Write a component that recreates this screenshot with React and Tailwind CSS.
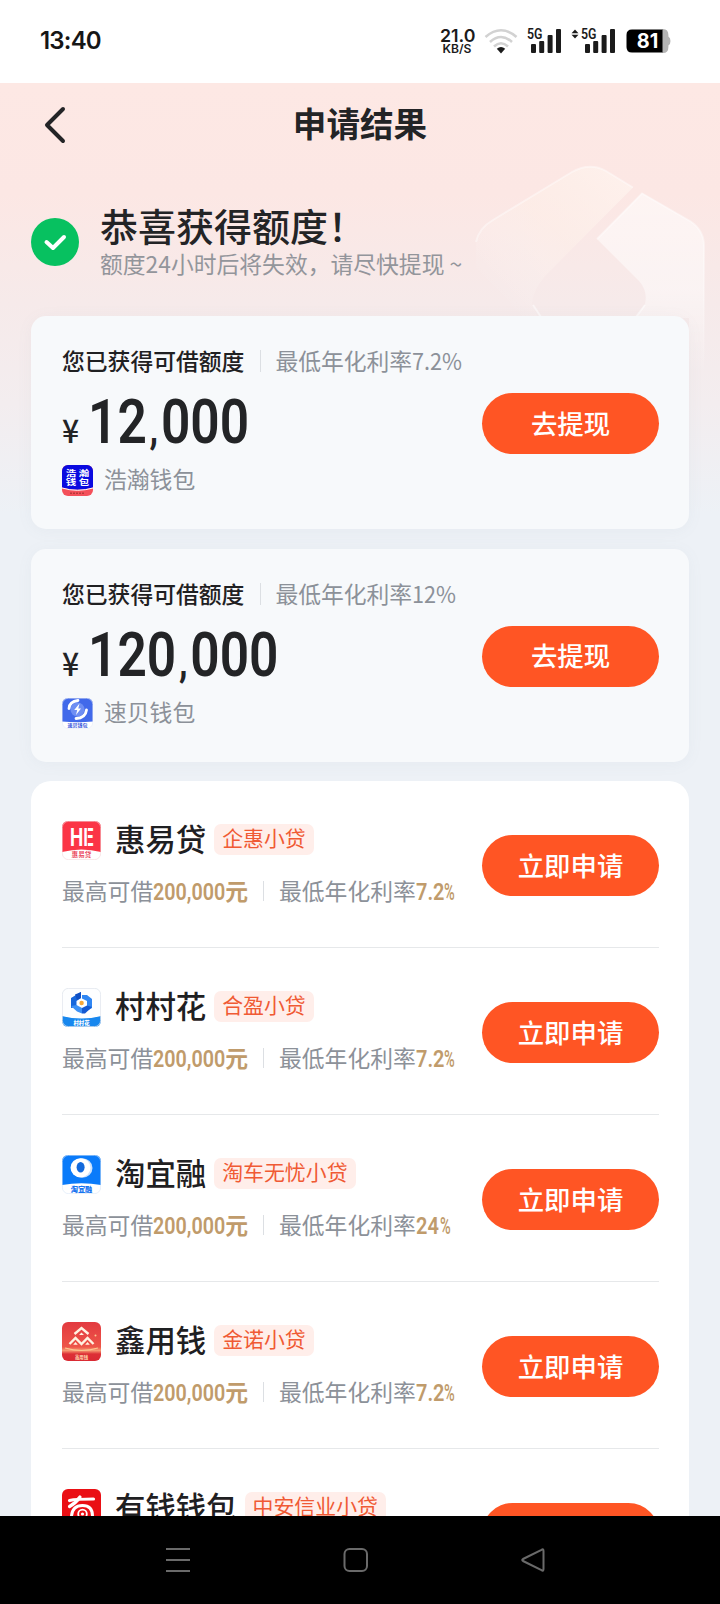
const CJK = "font-['Noto_Sans_CJK_SC',sans-serif]";

function SignalBars({ arrows }) {
  return (
    <svg className="overflow-visible" width={arrows ? 46 : 36} height="26" viewBox={arrows ? "-10 0 46 26" : "0 0 36 26"} fill="#1b1b1b">
      {arrows && (
        <>
          <path d="M-9.5 4.2 L-6 0.4 L-2.5 4.2Z" transform="translate(0 1)" />
          <path d="M-9.5 6.8 L-6 10.6 L-2.5 6.8Z" />
        </>
      )}
      <text x="0" y="10.8" fontFamily="Roboto, sans-serif" fontSize="14.6" fontWeight="600" textLength="15.5" lengthAdjust="spacingAndGlyphs">5G</text>
      <rect x="4" y="16" width="5" height="9" rx="1" />
      <rect x="12.2" y="13" width="5" height="12" rx="1" />
      <rect x="20.6" y="7" width="5" height="18" rx="1" />
      <rect x="29" y="1" width="5" height="24" rx="1" />
    </svg>
  );
}

function StatusBar() {
  return (
    <div className="flex h-[83px] shrink-0 items-center bg-white pb-[2px] pl-10 pr-[49px] text-[#161616]">
      <div className="w-[70px] whitespace-nowrap font-['Inter',sans-serif] text-[24px] font-semibold leading-none tracking-[-0.8px]">13:40</div>
      <div className="ml-auto flex items-center">
        <svg className="overflow-visible" width="36" height="26" viewBox="0 0 36 26" fill="#1b1b1b" fontFamily="Inter, sans-serif">
          <text x="0" y="14" fontSize="17.500" fontWeight="600" textLength="35.500" lengthAdjust="spacingAndGlyphs">21.0</text>
          <text x="2.500" y="24.500" fontSize="11.500" fontWeight="600" textLength="29" lengthAdjust="spacingAndGlyphs">KB/S</text>
        </svg>
        <svg className="ml-[8px]" width="34" height="26" viewBox="0 0 34 26" fill="none" strokeWidth="2.6">
          <g stroke="#d2d2d2">
            <path d="M1.5 9 Q17 -4.5 32.5 9" />
            <path d="M6 14 Q17 4 28 14" />
            <path d="M10 18.5 Q17 12 24 18.5" />
          </g>
          <path d="M17 25.5 L12.8 20.8 Q17 17 21.2 20.8Z" fill="#1b1b1b" />
        </svg>
        <div className="ml-[9px] flex"><SignalBars /></div>
        <div className="ml-[8px] flex"><SignalBars arrows /></div>
        <svg className="ml-[9px] overflow-visible" width="45" height="24" viewBox="0 0 45 24">
          <path d="M36 0 H37 Q42.4 0 42.4 6 V7.5 Q44.5 8.5 44.5 12 T42.4 16.5 V18 Q42.4 24 37 24 H36Z" fill="#b5b5b5" />
          <path d="M6 0.5 H36.5 V23.5 H6 Q0.5 23.5 0.5 18 V6 Q0.5 0.5 6 0.5Z" fill="#000" />
          <text x="10.8" y="19.4" fontFamily="Inter, sans-serif" fontSize="20" fontWeight="700" fill="#fff" textLength="21.500" lengthAdjust="spacingAndGlyphs">81</text>
        </svg>
      </div>
    </div>
  );
}

function Watermark() {
  return (
    <svg className="absolute left-[470px] top-[78px]" width="240" height="220" viewBox="470 161 240 220" fill="none">
      <defs>
        <linearGradient id="wmLeft" x1="625" y1="180" x2="500" y2="300" gradientUnits="userSpaceOnUse">
          <stop offset="0" stopColor="#fff8f2" stopOpacity="0.55" />
          <stop offset="0.5" stopColor="#fff3ea" stopOpacity="0.4" />
          <stop offset="1" stopColor="#fff" stopOpacity="0" />
        </linearGradient>
        <linearGradient id="wmRight" x1="680" y1="210" x2="680" y2="375" gradientUnits="userSpaceOnUse">
          <stop offset="0" stopColor="#fff" stopOpacity="0.55" />
          <stop offset="0.5" stopColor="#fff" stopOpacity="0.45" />
          <stop offset="1" stopColor="#fff" stopOpacity="0" />
        </linearGradient>
        <linearGradient id="wmEdge" x1="0" y1="240" x2="0" y2="370" gradientUnits="userSpaceOnUse">
          <stop offset="0" stopColor="#fff" stopOpacity="0.4" />
          <stop offset="1" stopColor="#fff" stopOpacity="0" />
        </linearGradient>
      </defs>
      <path d="M476 244 Q479 228 493 220 L572 172 Q590 162 606 171 L633 187.500 L545 276 Q533 290 532 304 L538 318 L476 318Z" fill="url(#wmLeft)" />
      <path d="M642 193 L690 221 Q704 230 704 246 V375 H689 V318 H636 L645 304 Q648 291 639 281 L597 239Z" fill="url(#wmRight)" />
      <path d="M476 242 Q479 228 493 220 L572 172 Q590 162 606 171 L633 187.500" stroke="#fff" strokeOpacity="0.4" strokeWidth="2" />
      <path d="M597 239 L642 193.500 L690 221 Q704 230 704 246 V370" stroke="url(#wmEdge)" strokeWidth="2" />
      <path d="M533 305 L541 317 M645 305 L636 317" stroke="#fff" strokeOpacity="0.5" strokeWidth="2" />
    </svg>
  );
}

const logoText = { fontFamily: "Noto Sans CJK SC, sans-serif", textAnchor: "middle" };

function HaohanLogo() {
  return (
    <svg width="31" height="31" viewBox="0 0 31 31">
      <clipPath id="hh"><rect width="31" height="31" rx="6" /></clipPath>
      <g clipPath="url(#hh)">
        <rect width="31" height="31" fill="#f4505a" />
        <path d="M0 0 H31 V22.500 Q15.500 27 0 22.500Z" fill="#0a0ae0" />
        <path d="M0 23 Q15.500 27.500 31 23" stroke="#fff" strokeWidth="1" fill="none" />
        <path d="M8 28.200 H23" stroke="#b83a3a" strokeWidth="1.400" strokeDasharray="2 1" />
        <g fontFamily="Noto Sans CJK SC, sans-serif" fill="#fff" fontWeight="700" fontSize="8">
          <text x="3.800" y="11" textLength="10.500" lengthAdjust="spacingAndGlyphs">浩</text>
          <text x="16.800" y="11" textLength="10.500" lengthAdjust="spacingAndGlyphs">瀚</text>
          <text x="3.800" y="19.800" textLength="10.500" lengthAdjust="spacingAndGlyphs">钱</text>
          <text x="16.800" y="19.800" textLength="10.500" lengthAdjust="spacingAndGlyphs">包</text>
        </g>
      </g>
    </svg>
  );
}

function SubeiLogo() {
  return (
    <svg width="31" height="31" viewBox="0 0 31 31">
      <clipPath id="sb"><rect width="31" height="31" rx="6" /></clipPath>
      <g clipPath="url(#sb)">
        <rect width="31" height="31" fill="#fff" />
        <path d="M0 0 H31 V23.500 Q15.500 25 0 23.500Z" fill="#4169ea" />
        <circle cx="15.500" cy="11.500" r="7" fill="#7d9bf5" opacity="0.75" />
        <path d="M7 10.500 Q7.500 3.500 16 2.500" stroke="#fff" strokeWidth="2.800" fill="none" strokeLinecap="round" />
        <path d="M24.500 12 Q23.500 20 14 20.500" stroke="#fff" strokeWidth="2.800" fill="none" strokeLinecap="round" />
        <path d="M17.500 5.500 L12.200 12 H15.200 L14 17 L19 10.600 H16.300Z" fill="#fff" />
        <text {...logoText} x="15.500" y="29.200" fontSize="5" fontWeight="700" fill="#3b5bdc">速贝钱包</text>
      </g>
      <rect x="0.300" y="0.300" width="30.400" height="30.400" rx="6" fill="none" stroke="#e3e8f5" strokeWidth="0.600" />
    </svg>
  );
}

function HuiyidaiLogo() {
  return (
    <svg width="39" height="39" viewBox="0 0 39 39">
      <clipPath id="hy"><rect width="39" height="39" rx="6" /></clipPath>
      <g clipPath="url(#hy)">
        <rect width="39" height="39" fill="#fff" />
        <path d="M0 0 H39 V31 Q19.500 26 0 31Z" fill="#fb3546" />
        <text x="8" y="24.600" fontFamily="Inter, sans-serif" fontSize="24.500" fontWeight="700" fill="#fff" textLength="24" lengthAdjust="spacingAndGlyphs">HE</text>
        <path d="M25.300 6 V25" stroke="#fb3546" strokeWidth="0.900" />
        <text {...logoText} x="19.500" y="36.300" fontSize="6.600" fontWeight="500" fill="#e8304a">惠易贷</text>
      </g>
      <rect x="0.400" y="0.400" width="38.200" height="38.200" rx="6" fill="none" stroke="#f3d5d8" strokeWidth="0.600" />
    </svg>
  );
}

function CuncunhuaLogo() {
  return (
    <svg width="39" height="39" viewBox="0 0 39 39">
      <clipPath id="cc"><rect width="39" height="39" rx="6" /></clipPath>
      <g clipPath="url(#cc)">
        <rect width="39" height="39" fill="#fdfeff" />
        <path d="M0 28 Q19.500 33 39 28 V39 H0Z" fill="#1787ee" />
        <path d="M9 10 L19 4 V10 L14.500 13 V19 L9 20Z" fill="#1767dc" />
        <path d="M13 6.500 L19 4 V10 L15 12Z" fill="#0f4fc4" />
        <path d="M20 7 L25 7 L30 11 V20 L25 23 V13 L20 10.500Z" fill="#2f86f3" />
        <path d="M9 18 L14.500 17 L20 20 V25.500 L15 23.500Z" fill="#3c90f5" />
        <path d="M20 20 L25 17.500 L30 19 L23 25.500 H20Z" fill="#1459d2" />
        <circle cx="19.600" cy="15" r="2.200" fill="#f7a83a" />
        <text {...logoText} x="19.500" y="36.600" fontSize="5.400" fontWeight="900" fill="#fff">村村花</text>
      </g>
      <rect x="0.400" y="0.400" width="38.200" height="38.200" rx="6" fill="none" stroke="#dfe5ec" strokeWidth="0.800" />
    </svg>
  );
}

function TaoyirongLogo() {
  return (
    <svg width="39" height="39" viewBox="0 0 39 39">
      <clipPath id="ty"><rect width="39" height="39" rx="6" /></clipPath>
      <g clipPath="url(#ty)">
        <rect width="39" height="39" fill="#fff" />
        <path d="M0 0 H39 V30 Q19.500 26.500 0 30Z" fill="#0a7bfa" />
        <ellipse cx="20" cy="13" rx="10.500" ry="9.800" fill="#cfe3fb" />
        <ellipse cx="18.500" cy="12.700" rx="10" ry="9.500" fill="#fff" />
        <ellipse cx="18.600" cy="12.200" rx="4" ry="5.200" fill="#1269dc" />
        <text {...logoText} x="19.500" y="36.600" fontSize="7.200" fontWeight="900" fill="#1674f0">淘宜融</text>
      </g>
      <rect x="0.400" y="0.400" width="38.200" height="38.200" rx="6" fill="none" stroke="#d9e6f7" strokeWidth="0.600" />
    </svg>
  );
}

function XinyongqianLogo() {
  return (
    <svg width="39" height="39" viewBox="0 0 39 39">
      <defs>
        <linearGradient id="xyBg" x1="0" y1="0" x2="0" y2="1">
          <stop offset="0" stopColor="#e23a40" />
          <stop offset="0.64" stopColor="#ee5548" />
          <stop offset="0.73" stopColor="#f79a72" />
          <stop offset="0.82" stopColor="#dd2f36" />
          <stop offset="1" stopColor="#d92a33" />
        </linearGradient>
      </defs>
      <rect width="39" height="39" rx="6" fill="url(#xyBg)" />
      <g fill="none" stroke="#fff3e2" strokeWidth="2.400" strokeLinejoin="miter">
        <path d="M12.500 12 L19.500 6 L26.500 12" />
        <path d="M7.500 22 L13.500 16 L19.500 22 L25.500 16 L31.500 22" />
      </g>
      <path d="M19.500 10.500 L22 13 H17Z M13.500 20 L15.800 22.800 H11.200Z M25.500 20 L27.800 22.800 H23.200Z" fill="#fff3e2" />
      <path d="M3 26 Q19.500 31 36 26" stroke="#fbc68f" strokeWidth="1.200" fill="none" />
      <circle cx="33.500" cy="13.500" r="1" fill="#fbc68f" />
      <text {...logoText} x="19.500" y="36.500" fontSize="4.400" fontWeight="700" fill="#ffd9b0">鑫用钱</text>
    </svg>
  );
}

function YouqianLogo() {
  return (
    <svg width="39" height="39" viewBox="0 0 39 39">
      <rect width="39" height="39" rx="6" fill="#ea0f14" />
      <g fill="none" stroke="#fff" strokeLinecap="round">
        <path d="M7.500 11.500 Q14 10 31.500 10" strokeWidth="3.200" />
        <path d="M18 8 Q14 14 7.500 17.500" strokeWidth="3.200" />
        <path d="M9.500 34 V27 Q10.500 16.500 20.500 16.500 Q30.500 16.500 30.500 27 V34" strokeWidth="3" />
        <circle cx="20.500" cy="25" r="4.300" strokeWidth="1.800" />
      </g>
      <circle cx="20.500" cy="25" r="1.600" fill="#fff" />
    </svg>
  );
}

function Pill({ children }) {
  return (
    <button className="h-[61px] w-[177px] shrink-0 rounded-full bg-[#ff5524] pb-[3px] text-center text-[26.4px] font-medium leading-[57px] text-white">
      {children}
    </button>
  );
}

function CreditCard({ rate, amount, name, Logo }) {
  const [thousands, rest] = amount.split(",");
  return (
    <section className="flex h-[213px] items-start rounded-[15px] bg-[#f7f9fb] pl-[31px] pr-[30px] shadow-[0_2px_16px_rgba(120,130,150,0.06)]">
      <div className="flex-1">
        <div className="mt-[28px] flex h-[34px] items-center whitespace-nowrap text-[22.8px] leading-[34px]">
          <span className="font-medium text-[#1f2022]">您已获得可借额度</span>
          <span className="ml-[16px] mr-[14px] h-[22px] w-px bg-[#dcdfe3]" />
          <span className="text-[#8c9199]">
            最低年化利率<span className="inline-block origin-left scale-x-[0.95]">{rate}</span>
          </span>
        </div>
        <div className="mt-[14px] flex h-[60px] items-baseline whitespace-nowrap leading-[60px] text-[#232426]">
          <span className="w-[26px] text-[32px] font-medium leading-none">
            <span className="inline-block origin-left scale-x-[0.94]">¥</span>
          </span>
          <span className="inline-block origin-left scale-x-[0.83] font-['Roboto',sans-serif] text-[62px] font-semibold leading-[60px]">
            {thousands}
            <span className="inline-block w-[17px] text-center text-[44px] leading-none">,</span>
            {rest}
          </span>
        </div>
        <div className="mt-[13px] flex h-[31px] items-center gap-[11px] text-[22.8px] text-[#8c9199]">
          <Logo />
          <span className="relative -top-px">{name}</span>
        </div>
      </div>
      <div className="mt-[77px]"><Pill>去提现</Pill></div>
    </section>
  );
}

const narrow = "inline-block origin-left font-['Roboto',sans-serif] text-[23.5px] font-semibold";

function LoanRow({ name, tag, rate, Logo, last }) {
  return (
    <li className={`flex h-[167px] items-start ${last ? "" : "border-b border-[#e6e8ea]"}`}>
      <div className="flex-1">
        <div className="mt-[37px] flex h-[44px] items-center whitespace-nowrap">
          <Logo />
          <span className="ml-[14px] mt-[-5px] text-[30.4px] font-medium leading-[44px] text-[#1f2022]">{name}</span>
          <span className="ml-[8px] mt-[-2px] h-[31px] rounded-[7px] bg-[#ffeeea] px-[8px] text-[20.9px] leading-[27px] text-[#f05a34]">{tag}</span>
        </div>
        <div className="mt-[12px] flex h-[34px] items-center whitespace-nowrap text-[22.8px] leading-[34px] text-[#8c9199]">
          <span>最高可借</span>
          <span className="w-[72px] text-[#c09b6b]">
            <span className={`${narrow} scale-x-[0.84]`}>200,000</span>
          </span>
          <span className="font-bold text-[#c09b6b]">元</span>
          <span className="ml-[15px] mr-[15px] h-[20px] w-px bg-[#dcdfe3]" />
          <span>最低年化利率</span>
          <span className="flex text-[#c09b6b]">
            <span className="w-[28px]"><span className={`${narrow} scale-x-[0.85]`}>{rate.replace("%", "")}</span></span>
            <span className={rate.includes(".") ? "w-[12px]" : "-ml-[4px] w-[12px]"}>
              <span className="inline-block origin-left scale-x-[0.62] font-['Roboto',sans-serif] text-[23.500px] font-medium">%</span>
            </span>
          </span>
        </div>
      </div>
      <div className="mt-[54px]"><Pill>立即申请</Pill></div>
    </li>
  );
}

const credits = [
  { rate: "7.2%", amount: "12,000", name: "浩瀚钱包", Logo: HaohanLogo },
  { rate: "12%", amount: "120,000", name: "速贝钱包", Logo: SubeiLogo },
];

const loans = [
  { name: "惠易贷", tag: "企惠小贷", rate: "7.2%", Logo: HuiyidaiLogo },
  { name: "村村花", tag: "合盈小贷", rate: "7.2%", Logo: CuncunhuaLogo },
  { name: "淘宜融", tag: "淘车无忧小贷", rate: "24%", Logo: TaoyirongLogo },
  { name: "鑫用钱", tag: "金诺小贷", rate: "7.2%", Logo: XinyongqianLogo },
  { name: "有钱钱包", tag: "中安信业小贷", rate: "7.2%", Logo: YouqianLogo },
];

function NavBar() {
  return (
    <nav className="flex h-[88px] shrink-0 items-center justify-between bg-black pl-[164px] pr-[173px]">
      <svg width="28" height="28" viewBox="0 0 28 28" stroke="#6a6a6a" strokeWidth="2">
        <path d="M2 3 H26 M2 14 H26 M2 25 H26" />
      </svg>
      <svg width="28" height="28" viewBox="0 0 28 28" fill="none" stroke="#6a6a6a" strokeWidth="2">
        <rect x="2.500" y="3" width="22.500" height="22" rx="5" />
      </svg>
      <svg width="28" height="28" viewBox="0 0 28 28" fill="none" stroke="#6a6a6a" strokeWidth="2" strokeLinejoin="round">
        <path d="M24.500 5 V23 Q24.500 25.500 22.500 24.200 L4 15 Q2.500 14 4 13 L22.500 3.800 Q24.500 2.500 24.500 5Z" />
      </svg>
    </nav>
  );
}

export default function App() {
  return (
    <div className={`flex h-[1604px] w-[720px] flex-col overflow-hidden bg-[#edf1f5] ${CJK}`}>
      <StatusBar />
      <main className="relative min-h-0 flex-1 overflow-hidden bg-[linear-gradient(180deg,#fde8e4_0px,#fce7e4_110px,#f6eaea_220px,#f3edef_320px,#edf1f6_430px)]">
        <Watermark />
        <header className="relative flex h-[84px] items-center justify-center">
          <svg className="absolute left-[42px] top-[22px]" width="26" height="40" viewBox="0 0 26 40" fill="none" stroke="#232426" strokeWidth="4" strokeLinecap="round" strokeLinejoin="round">
            <path d="M21 4 L5 20 L21 36" />
          </svg>
          <h1 className="mt-[-4px] text-[33.6px] font-bold leading-[48px] text-[#232426]">申请结果</h1>
        </header>
        <div className="relative flex h-[149px] items-start pl-[31px] pt-[36px]">
          <svg className="mt-[15px]" width="48" height="48" viewBox="0 0 48 48" fill="none">
            <circle cx="24" cy="24" r="24" fill="#07c160" />
            <path d="M15.500 24 L22 30 L33 19" stroke="#fff" strokeWidth="4" strokeLinecap="round" strokeLinejoin="round" />
          </svg>
          <div className="ml-[21px] whitespace-nowrap">
            <div className="h-[46px] text-[38px] font-medium leading-[44px] text-[#232426]">恭喜获得额度！</div>
            <div className="text-[22.8px] leading-[30px] text-[#93959b]">额度24小时后将失效，请尽快提现 ~</div>
          </div>
        </div>
        <div className="relative flex flex-col gap-[19.500px] px-[31px]">
          {credits.map((c) => <CreditCard key={c.name} {...c} />)}
          <ul className="rounded-[20px] bg-white pl-[31px] pr-[30px]">
            {loans.map((l, i) => <LoanRow key={l.name} {...l} last={i === loans.length - 1} />)}
          </ul>
        </div>
      </main>
      <NavBar />
    </div>
  );
}
